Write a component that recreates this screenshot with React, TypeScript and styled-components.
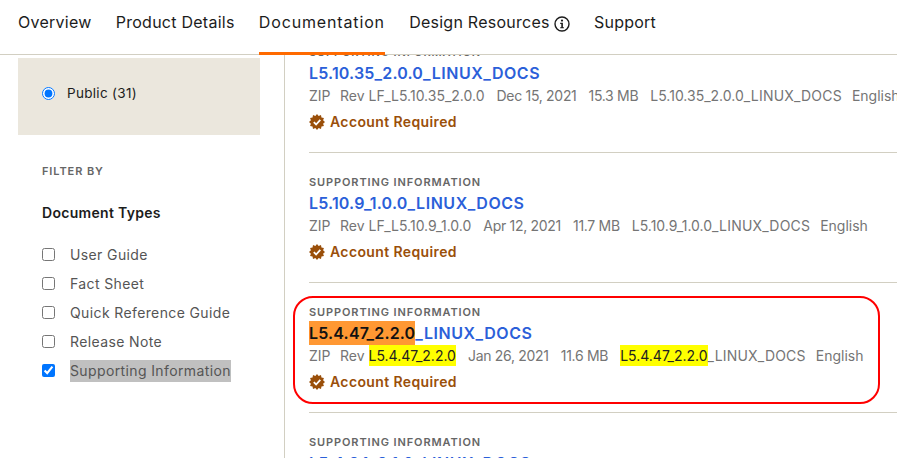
import React from 'react'
import styled, { createGlobalStyle } from 'styled-components'

const Colors = {
  Ink: '#1c1c1c',
  Grey: '#757575',
  Label: '#666666',
  Line: '#d2cfc2',
  Panel: '#ebe7dd',
  Blue: '#2b5fd9',
  Brown: '#9a4f0a',
  Orange: '#ff6a00',
}

const GlobalStyle = createGlobalStyle`
  html, body {
    margin: 0;
    height: 100%;
    overflow: hidden;
    background: #fff;
    font-family: Inter, 'Liberation Sans', sans-serif;
  }
`

const Page = styled.div`
  width: 897px;
  height: 458px;
  overflow: hidden;
  display: flex;
  flex-direction: column;
`

const Tabs = styled.nav`
  flex: none;
  height: 55px;
  box-sizing: border-box;
  display: flex;
  gap: 24.25px;
  padding-left: 18px;
  border-bottom: 1px solid ${Colors.Line};
`

const Tab = styled.div<{ $active?: boolean }>`
  height: 55px;
  box-sizing: border-box;
  display: flex;
  align-items: flex-start;
  gap: 4px;
  padding-top: 12px;
  font-size: 16px;
  line-height: 20px;
  letter-spacing: ${({ $active }) => ($active ? '0.85px' : '0.25px')};
  color: ${Colors.Ink};
  border-bottom: ${({ $active }) =>
    $active ? `3px solid ${Colors.Orange}` : 'none'};
`

const InfoIcon = styled.svg`
  width: 16px;
  height: 16px;
  margin-top: 4px;
`

const Body = styled.div`
  flex: 1;
  min-height: 0;
  display: flex;
`

const Sidebar = styled.aside`
  flex: none;
  width: 285px;
  box-sizing: border-box;
  padding: 3px 24px 0 18px;
  border-right: 1px solid ${Colors.Line};
`

const AccessPanel = styled.div`
  width: 242px;
  height: 77px;
  box-sizing: border-box;
  background: ${Colors.Panel};
  display: flex;
  align-items: center;
  gap: 12px;
  padding: 0 0 7px 24px;
  font-size: 13.5px;
  letter-spacing: 0.3px;
  color: ${Colors.Ink};
`

const NativeInput = styled.input`
  width: 13px;
  height: 13px;
  margin: 0;
  flex: none;
`

const Filters = styled.div`
  padding: 29px 0 0 24px;
`

const FilterBy = styled.div`
  font-size: 11px;
  line-height: 14px;
  font-weight: 600;
  letter-spacing: 0.9px;
  color: ${Colors.Label};
`

const FilterTitle = styled.div`
  margin: 25px 0 17px;
  font-size: 14px;
  line-height: 20px;
  font-weight: 600;
  letter-spacing: 0.3px;
  color: ${Colors.Ink};
`

const FilterRow = styled.label`
  height: 29px;
  display: flex;
  align-items: center;
  gap: 15px;
  font-size: 14px;
  letter-spacing: 0.38px;
  color: #555;
`

const FilterText = styled.span<{ $selected?: boolean }>`
  line-height: 22px;
  background: ${({ $selected }) => ($selected ? '#c0c0c0' : 'transparent')};
`

const Results = styled.main`
  flex: 1;
  min-width: 0;
  overflow: hidden;
`

const ResultList = styled.div`
  margin-top: -32px;
  padding-left: 24px;
`

const Row = styled.article`
  position: relative;
  height: 130px;
  box-sizing: border-box;
  padding-top: 20px;
  border-bottom: 1px solid ${Colors.Line};
  white-space: nowrap;
`

const RowLabel = styled.div`
  font-size: 11px;
  line-height: 18px;
  font-weight: 600;
  letter-spacing: 0.89px;
  color: ${Colors.Label};
`

const RowTitle = styled.a`
  display: block;
  margin-top: 1px;
  font-size: 16px;
  line-height: 23px;
  font-weight: 600;
  letter-spacing: 0.55px;
  color: ${Colors.Blue};
`

const TitleVersion = styled.span`
  letter-spacing: 0.17px;
`

const TitleMark = styled.mark`
  padding: 2px 0;
  background: #ff9833;
  color: #111;
  letter-spacing: 0.17px;
`

const Meta = styled.div`
  display: flex;
  gap: 12px;
  font-size: 14px;
  line-height: 22px;
  color: ${Colors.Grey};
`

const MetaType = styled.span`
  width: 19px;
`

const MetaFigure = styled.span`
  letter-spacing: -0.3px;
`

const MetaSuffix = styled.span`
  letter-spacing: 0.2px;
`

const MetaLang = styled.span`
  margin-left: -2px;
`

const MetaMark = styled.mark`
  padding: 2px 0;
  background: #ffff00;
  color: #222;
`

const Account = styled.div`
  display: flex;
  align-items: center;
  gap: 5px;
  margin-top: 5px;
  font-size: 14px;
  line-height: 20px;
  font-weight: 600;
  letter-spacing: 0.38px;
  color: ${Colors.Brown};
`

const BadgeIcon = styled.svg`
  width: 16px;
  height: 16px;
  flex: none;
`

// hand-drawn annotation in the reference, sits over the row
const Annotation = styled.div`
  position: absolute;
  left: -16px;
  top: 13px;
  width: 587px;
  height: 108px;
  box-sizing: border-box;
  border: 2px solid #ff0000;
  border-radius: 20px;
  pointer-events: none;
`

const badgePoints = Array.from({ length: 24 }, (_, i) => {
  const r = i % 2 === 0 ? 8 : 6.3
  const a = (i * Math.PI) / 12
  return `${(8 + r * Math.sin(a)).toFixed(2)},${(8 - r * Math.cos(a)).toFixed(2)}`
}).join(' ')

const Badge = () => (
  <BadgeIcon viewBox='0 0 16 16'>
    <polygon points={badgePoints} fill={Colors.Brown} />
    <path
      d='M4.8 8.2 7.1 10.5 11.3 5.9'
      fill='none'
      stroke='#fff'
      strokeWidth='1.8'
    />
  </BadgeIcon>
)

type Doc = {
  name: string
  rev: string
  date: string
  size: string
}

const docs: Array<Doc> = [
  { name: 'L5.10.35_2.0.0', rev: 'LF_L5.10.35_2.0.0', date: 'Dec 15, 2021', size: '15.3 MB' },
  { name: 'L5.10.9_1.0.0', rev: 'LF_L5.10.9_1.0.0', date: 'Apr 12, 2021', size: '11.7 MB' },
]

const PlainRow = ({ doc }: { doc: Doc }) => (
  <Row>
    <RowLabel>SUPPORTING INFORMATION</RowLabel>
    <RowTitle>
      <TitleVersion>{doc.name}</TitleVersion>_LINUX_DOCS
    </RowTitle>
    <Meta>
      <MetaType>ZIP</MetaType>
      <span>Rev {doc.rev}</span>
      <MetaFigure>{doc.date}</MetaFigure>
      <MetaFigure>{doc.size}</MetaFigure>
      <span>
        {doc.name}
        <MetaSuffix>_LINUX_DOCS</MetaSuffix>
      </span>
      <MetaLang>English</MetaLang>
    </Meta>
    <Account>
      <Badge />
      Account Required
    </Account>
  </Row>
)

const filters = [
  'User Guide',
  'Fact Sheet',
  'Quick Reference Guide',
  'Release Note',
  'Supporting Information',
]

export default function App() {
  return (
    <Page>
      <GlobalStyle />
      <Tabs>
        <Tab>Overview</Tab>
        <Tab>Product Details</Tab>
        <Tab $active>Documentation</Tab>
        <Tab>
          Design Resources
          <InfoIcon viewBox='0 0 16 16'>
            <circle cx='8' cy='8' r='7' fill='none' stroke='#1c1c1c' strokeWidth='1.4' />
            <circle cx='8' cy='4.6' r='1.1' fill='#1c1c1c' />
            <path d='M6.2 6.8h2.7v4.4h1v1.1H6.2v-1.1h1.1V7.9H6.2z' fill='#1c1c1c' />
          </InfoIcon>
        </Tab>
        <Tab>Support</Tab>
      </Tabs>
      <Body>
        <Sidebar>
          <AccessPanel>
            <NativeInput type='radio' defaultChecked />
            Public (31)
          </AccessPanel>
          <Filters>
            <FilterBy>FILTER BY</FilterBy>
            <FilterTitle>Document Types</FilterTitle>
            {filters.map((f, i) => (
              <FilterRow key={f}>
                <NativeInput type='checkbox' defaultChecked={i === 4} />
                <FilterText $selected={i === 4}>{f}</FilterText>
              </FilterRow>
            ))}
          </Filters>
        </Sidebar>
        <Results>
          <ResultList>
            {docs.map(d => (
              <PlainRow key={d.name} doc={d} />
            ))}
            <Row>
              <Annotation />
              <RowLabel>SUPPORTING INFORMATION</RowLabel>
              <RowTitle>
                <TitleMark>L5.4.47_2.2.0</TitleMark>_LINUX_DOCS
              </RowTitle>
              <Meta>
                <MetaType>ZIP</MetaType>
                <span>
                  Rev <MetaMark>L5.4.47_2.2.0</MetaMark>
                </span>
                <MetaFigure>Jan 26, 2021</MetaFigure>
                <MetaFigure>11.6 MB</MetaFigure>
                <span>
                  <MetaMark>L5.4.47_2.2.0</MetaMark>
                  <MetaSuffix>_LINUX_DOCS</MetaSuffix>
                </span>
                <MetaLang>English</MetaLang>
              </Meta>
              <Account>
                <Badge />
                Account Required
              </Account>
            </Row>
            <Row>
              <RowLabel>SUPPORTING INFORMATION</RowLabel>
              <RowTitle>
                <TitleVersion>L5.4.24_2.1.0</TitleVersion>_LINUX_DOCS
              </RowTitle>
            </Row>
          </ResultList>
        </Results>
      </Body>
    </Page>
  )
}
